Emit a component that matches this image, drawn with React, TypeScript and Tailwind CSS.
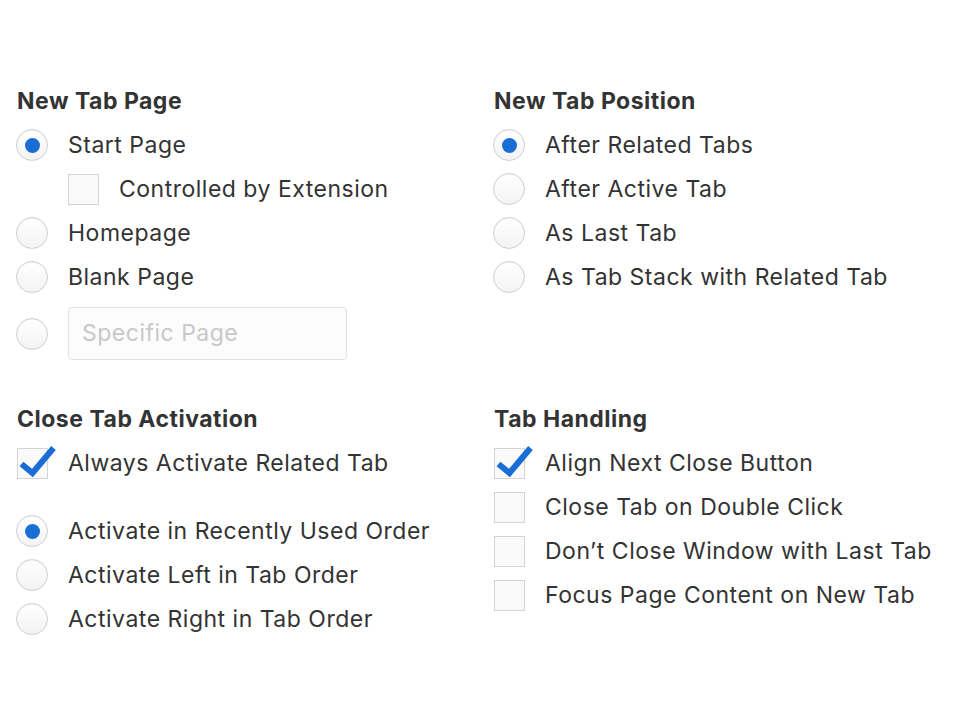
import React from 'react';

function Radio({ checked }: { checked?: boolean }) {
  return (
    <span className="w-8 h-8 rounded-full border border-[#d0d0d0] bg-gradient-to-b from-white to-[#f3f3f3] flex items-center justify-center shrink-0 shadow-[inset_0_1px_1px_rgba(0,0,0,0.04)]">
      {checked && <span className="w-[15px] h-[15px] rounded-full bg-[#1b6dd6]" />}
    </span>
  );
}

function Checkbox({ checked }: { checked?: boolean }) {
  return (
    <span className="relative w-[31px] h-[31px] ml-px border border-[#d4d4d4] bg-[#fafafa] shrink-0">
      {checked && (
        <svg className="absolute left-0 -top-[7px] overflow-visible" width="40" height="38" viewBox="0 0 40 38">
          <path d="M3.5 22 L14.5 31 L35.5 6" fill="none" stroke="#1b6dd6" strokeWidth="6" strokeLinecap="butt" strokeLinejoin="miter" />
        </svg>
      )}
    </span>
  );
}

function Row({ children, control, indent }: { children: React.ReactNode; control: React.ReactNode; indent?: boolean }) {
  return (
    <div className={`h-11 flex items-center gap-5 ${indent ? 'pl-[51px]' : ''}`}>
      {control}
      <span>{children}</span>
    </div>
  );
}

function Heading({ children }: { children: React.ReactNode }) {
  return <div className="h-11 pl-px flex items-center font-bold text-[23px] tracking-[0.5px]">{children}</div>;
}

export default function App() {
  return (
    <div
      className="w-[960px] h-[720px] bg-white text-[#333] text-[23px] tracking-[0.5px] pl-[16px] pt-[79px]"
      style={{ fontFamily: 'Inter, "Noto Sans", sans-serif' }}
    >
      <div className="grid grid-cols-[477px_1fr] gap-y-[37px]">
        {/* New Tab Page */}
        <div>
          <Heading>New Tab Page</Heading>
          <Row control={<Radio checked />}>Start Page</Row>
          <Row indent control={<Checkbox />}>Controlled by Extension</Row>
          <Row control={<Radio />}>Homepage</Row>
          <Row control={<Radio />}>Blank Page</Row>
          <div className="flex items-center gap-5 mt-2">
            <Radio />
            <div className="w-[279px] h-[53px] rounded-[4px] border border-[#e2e2e2] bg-[#fcfcfc] flex items-center px-[13px] text-[#c8c8c8]">
              Specific Page
            </div>
          </div>
        </div>

        {/* New Tab Position */}
        <div>
          <Heading>New Tab Position</Heading>
          <Row control={<Radio checked />}>After Related Tabs</Row>
          <Row control={<Radio />}>After Active Tab</Row>
          <Row control={<Radio />}>As Last Tab</Row>
          <Row control={<Radio />}>As Tab Stack with Related Tab</Row>
        </div>

        {/* Close Tab Activation */}
        <div>
          <Heading>Close Tab Activation</Heading>
          <Row control={<Checkbox checked />}>Always Activate Related Tab</Row>
          <div className="mt-6">
            <Row control={<Radio checked />}>Activate in Recently Used Order</Row>
            <Row control={<Radio />}>Activate Left in Tab Order</Row>
            <Row control={<Radio />}>Activate Right in Tab Order</Row>
          </div>
        </div>

        {/* Tab Handling */}
        <div>
          <Heading>Tab Handling</Heading>
          <Row control={<Checkbox checked />}>Align Next Close Button</Row>
          <Row control={<Checkbox />}>Close Tab on Double Click</Row>
          <Row control={<Checkbox />}>Don’t Close Window with Last Tab</Row>
          <Row control={<Checkbox />}>Focus Page Content on New Tab</Row>
        </div>
      </div>
    </div>
  );
}
